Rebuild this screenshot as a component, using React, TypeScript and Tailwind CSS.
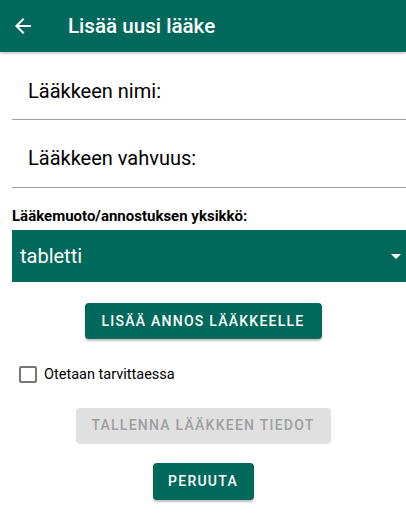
import React from 'react';

const App = () => {
  return (
    <div className="h-[515px] w-[406px] overflow-hidden bg-white font-['Roboto',sans-serif]">
      <header className="flex h-[52px] items-center bg-[#00695c] shadow-[0_1px_3px_rgba(0,0,0,0.3)]">
        <svg width="24" height="24" viewBox="0 0 24 24" className="ml-[11px]" fill="white">
          <path d="M20 11H7.83l5.59-5.59L12 4l-8 8 8 8 1.41-1.41L7.83 13H20v-2z" />
        </svg>
        <h1 className="ml-[33px] text-[20.6px] font-medium text-white">Lisää uusi lääke</h1>
      </header>

      <div className="pl-[12px]">
        <div className="flex h-[68px] items-end border-b border-[#9e9e9e] pb-[13px] pl-[16px]">
          <span className="text-[20px] text-black">Lääkkeen nimi:</span>
        </div>
        <div className="flex h-[68px] items-end border-b border-[#9e9e9e] pb-[14px] pl-[16px]">
          <span className="text-[20px] text-black">Lääkkeen vahvuus:</span>
        </div>

        <p className="mt-[19px] text-[15px] font-bold leading-[18px] text-black">
          Lääkemuoto/annostuksen yksikkö:
        </p>

        <div className="mt-[5px] flex h-[52px] items-center justify-between bg-[#00695c] pl-[8px] pr-[5px]">
          <span className="text-[20px] text-white">tabletti</span>
          <svg width="10" height="5" viewBox="0 0 10 5" fill="white">
            <path d="M0 0h10L5 5z" />
          </svg>
        </div>
      </div>

      <div className="mt-[21px] flex justify-center">
        <button className="h-[36px] w-[237px] rounded-[4px] bg-[#00695c] text-[14px] font-medium tracking-[1.25px] text-white shadow-[0_2px_2px_rgba(0,0,0,0.25)]">
          LISÄÄ ANNOS LÄÄKKEELLE
        </button>
      </div>

      <label className="mt-[25px] ml-[19px] flex items-center gap-[7px]">
        <span className="h-[17px] w-[18px] rounded-[2px] border-2 border-[#757575]" />
        <span className="text-[14.5px] text-black">Otetaan tarvittaessa</span>
      </label>

      <div className="mt-[22px] flex justify-center">
        <button className="h-[36px] w-[255px] rounded-[4px] bg-[#e0e0e0] text-[14px] font-medium tracking-[1.25px] text-[#9e9e9e]">
          TALLENNA LÄÄKKEEN TIEDOT
        </button>
      </div>

      <div className="mt-[19px] flex justify-center">
        <button className="h-[37px] w-[101px] rounded-[4px] bg-[#00695c] text-[14px] font-medium tracking-[1.25px] text-white shadow-[0_2px_2px_rgba(0,0,0,0.25)]">
          PERUUTA
        </button>
      </div>
    </div>
  );
};

export default App;
